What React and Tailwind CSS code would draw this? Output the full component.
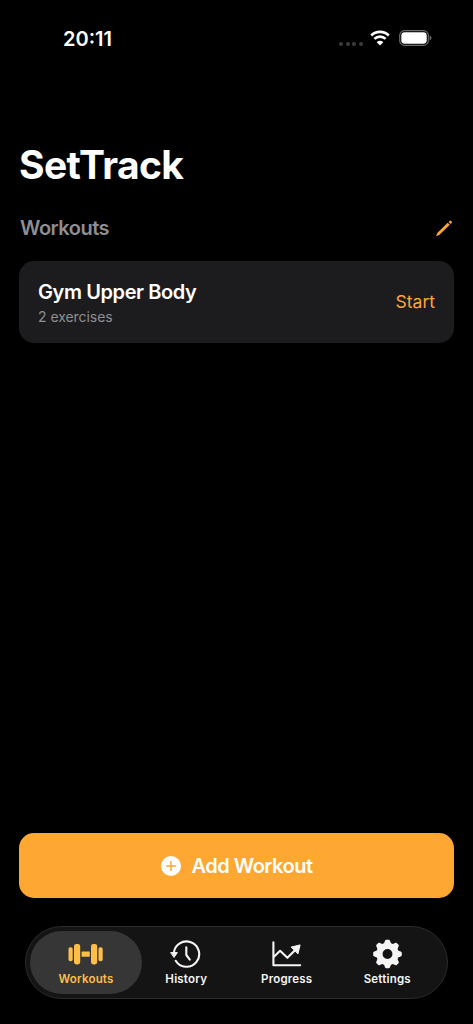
const PencilIcon = () => (
  <svg width="17" height="17" viewBox="0 0 17 17" fill="#ffa733">
    <path d="M1.5 12.7 11.7 2.7 13.8 4.8 3.5 14.8.8 16.1c-.4.1-.6-.1-.5-.5z" />
    <path d="m12.6 1.9.9-.9c.5-.5 1.2-.5 1.7 0l.4.4c.5.5.5 1.2 0 1.7l-.9.9z" />
  </svg>
);

const WifiIcon = () => (
  <svg width="20" height="16" viewBox="0 0 20 16" fill="none" stroke="#fff" strokeWidth="2.7">
    <path d="M1.2 5.5a12.5 12.5 0 0 1 17.6 0" />
    <path d="M4.4 8.9a8 8 0 0 1 11.2 0" />
    <path d="M10 15.5 6.7 12.2a4.7 4.7 0 0 1 6.6 0z" fill="#fff" stroke="none" />
  </svg>
);

const BatteryIcon = () => (
  <svg width="33" height="16" viewBox="0 0 33 16">
    <rect x=".7" y=".7" width="28.6" height="14.6" rx="4.8" fill="none" stroke="#6b6b6b" strokeWidth="1.2" />
    <rect x="2.3" y="2.3" width="25.4" height="11.4" rx="3.4" fill="#fff" />
    <path d="M30.6 5.6c1.3.4 1.8 1.3 1.8 2.4s-.5 2-1.8 2.4z" fill="#6b6b6b" />
  </svg>
);

const DumbbellIcon = () => (
  <svg width="36" height="30" viewBox="0 0 36 30" fill="#ffbe48">
    <rect x=".5" y="8.3" width="4.2" height="14" rx="1.8" />
    <rect x="6" y="5" width="6.2" height="20.4" rx="2.4" />
    <rect x="13.6" y="12.4" width="8.2" height="5.4" rx=".5" />
    <rect x="23" y="5" width="6.2" height="20.4" rx="2.4" />
    <rect x="30.5" y="8.3" width="4.2" height="14" rx="1.8" />
  </svg>
);

const HistoryIcon = () => (
  <svg width="32" height="30" viewBox="0 0 32 30" fill="none" stroke="#f5f5f5" strokeWidth="2.1" strokeLinecap="round" strokeLinejoin="round">
    <path d="M3.8 14.8a12.7 12.7 0 1 1 1.9 7" />
    <path d="M16.3 8.2V16l3.5 4.6" />
    <path d="M1 13.6h6.4l-3.2 4.6z" fill="#f5f5f5" strokeWidth="1" />
  </svg>
);

const ProgressIcon = () => (
  <svg width="32" height="30" viewBox="0 0 32 30" fill="none" stroke="#f5f5f5" strokeWidth="2.1" strokeLinecap="round" strokeLinejoin="round">
    <path d="M2.4 3.3V26.2H29.2" />
    <path d="m3.2 17.4 5.9-5.6 7.3 7 8.6-8.6" />
    <path d="m20.4 8 8.7-2.1-2.1 8.7z" fill="#f5f5f5" strokeWidth="1" />
  </svg>
);

const SettingsIcon = () => (
  <svg width="30" height="30" viewBox="-15.5 -15 30 30" fill="#f5f5f5">
    <circle r="8.1" fill="none" stroke="#f5f5f5" strokeWidth="6.3" />
    {[0, 45, 90, 135, 180, 225, 270, 315].map((angle) => (
      <path
        key={angle}
        transform={`rotate(${angle})`}
        d="M-3.8-9.8-2.5-13.2c.2-.7.6-1.1 1.2-1.1h2.6c.6 0 1 .4 1.2 1.1L3.8-9.8z"
      />
    ))}
  </svg>
);

const tabs = [
  { name: "Workouts", Icon: DumbbellIcon, active: true },
  { name: "History", Icon: HistoryIcon },
  { name: "Progress", Icon: ProgressIcon },
  { name: "Settings", Icon: SettingsIcon },
];

const StatusBar = () => (
  <div className="flex h-[76px] items-center justify-between pl-[63px] pr-[41px]">
    <span className="pt-[2px] text-[20px] font-semibold">20:11</span>
    <div className="flex items-center">
      <div className="mr-[7px] mt-[12px] flex gap-[2.3px]">
        {[1, 2, 3, 4].map((dot) => (
          <span key={dot} className="size-[4.3px] rounded-full bg-[#3c3c3c]" />
        ))}
      </div>
      <WifiIcon />
      <div className="ml-[9px]">
        <BatteryIcon />
      </div>
    </div>
  </div>
);

const App = () => {
  return (
    <div
      className="flex h-[1024px] w-[473px] flex-col overflow-hidden bg-black text-white"
      style={{ fontFamily: 'Inter, "Liberation Sans", sans-serif' }}
    >
      <StatusBar />

      <main className="flex flex-1 flex-col px-[19px] pt-[65px]">
        <h1 className="text-[39px] leading-[48px] font-bold tracking-[-0.6px]">SetTrack</h1>

        <div className="mt-[25px] flex h-[28px] items-center justify-between pr-px">
          <h2 className="pl-px text-[20px] leading-[28px] font-semibold tracking-[-0.5px] text-[#8e8e93]">
            Workouts
          </h2>
          <button aria-label="Edit workouts">
            <PencilIcon />
          </button>
        </div>

        <div className="mt-[19px] flex h-[82px] items-center justify-between rounded-[15px] bg-[#1c1c1e] px-[19px]">
          <div className="pt-[2px]">
            <h3 className="text-[20px] leading-[26px] font-semibold tracking-[-0.4px]">
              Gym Upper Body
            </h3>
            <p className="text-[14px] leading-[23px] tracking-[-0.05px] text-[#8e8e93]">2 exercises</p>
          </div>
          <button className="pt-px text-[17.5px] text-[#ffa733]">Start</button>
        </div>

        <button className="mt-auto mb-[28px] flex h-[65px] items-center justify-center gap-[11px] rounded-[15px] bg-[#ffa733] text-[20px] font-semibold tracking-[-0.5px]">
          <svg width="20" height="20" viewBox="0 0 20 20">
            <circle cx="10" cy="10" r="10" fill="#fff" />
            <path d="M10 5.6v8.8M5.6 10h8.8" stroke="#ffa733" strokeWidth="1.5" strokeLinecap="round" />
          </svg>
          <span className="pt-px">Add Workout</span>
        </button>
      </main>

      <nav className="mx-[25px] mb-[25px] flex h-[73px] shrink-0 rounded-full border border-[#2b2b2b] bg-[#141414] p-[4px]">
        {tabs.map(({ name, Icon, active }) => (
          <button
            key={name}
            className={
              active
                ? "-mr-[6px] flex w-[112px] flex-col items-center rounded-full bg-[#363636] pt-[8px] text-[#ffbe48]"
                : "flex w-[100.5px] flex-col items-center pt-[8px] text-[#f5f5f5]"
            }
          >
            <Icon />
            <span className="mt-px text-[11.5px] leading-[18px] font-semibold tracking-[0.2px]">{name}</span>
          </button>
        ))}
      </nav>
    </div>
  );
};

export default App;
